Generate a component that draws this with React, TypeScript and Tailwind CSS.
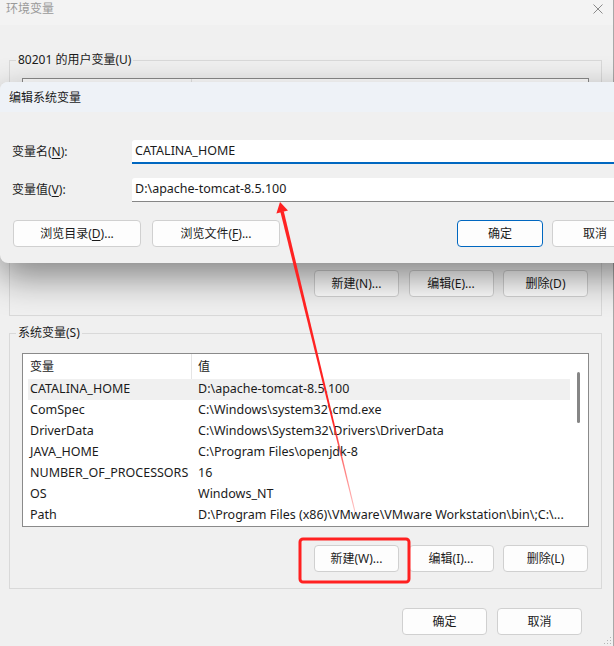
import React from "react";

const rows: [string, string][] = [
  ["CATALINA_HOME", "D:\\apache-tomcat-8.5.100"],
  ["ComSpec", "C:\\Windows\\system32\\cmd.exe"],
  ["DriverData", "C:\\Windows\\System32\\Drivers\\DriverData"],
  ["JAVA_HOME", "C:\\Program Files\\openjdk-8"],
  ["NUMBER_OF_PROCESSORS", "16"],
  ["OS", "Windows_NT"],
  ["Path", "D:\\Program Files (x86)\\VMware\\VMware Workstation\\bin\\;C:\\..."],
];

function Btn({ children, className = "" }: { children: React.ReactNode; className?: string }) {
  return (
    <div
      className={`flex h-[27px] shrink-0 items-center justify-center rounded-[4px] border border-[#d0d0d0] bg-[#fdfdfd] text-[12px] leading-none text-[#1b1b1b] ${className}`}
    >
      {children}
    </div>
  );
}

function ListBox({ data, showHeader }: { data: [string, string][]; showHeader: boolean }) {
  return (
    <div className="flex h-[174px] w-[567px] border border-[#8a8a8a] bg-white">
      <div className="flex flex-1 flex-col pl-[5px]">
        <div className="flex h-[25px] shrink-0 items-stretch text-[12px]">
          <div className="flex w-[163px] items-center pl-[2px]">{showHeader ? "变量" : ""}</div>
          <div className="w-px bg-[#e5e5e5]" />
          <div className="flex flex-1 items-center pl-[6px]">{showHeader ? "值" : ""}</div>
        </div>
        {data.map(([k, v], i) => (
          <div
            key={k}
            className={`grid h-[21px] shrink-0 grid-cols-[168px_1fr] items-center text-[12.5px] ${i === 0 ? "bg-[#f0f0f0]" : ""}`}
          >
            <div className="overflow-hidden whitespace-nowrap pl-[2px]">{k}</div>
            <div className="overflow-hidden whitespace-nowrap pl-[2px]">{v}</div>
          </div>
        ))}
      </div>
      <div className="flex w-[18px] shrink-0 flex-col pt-[18px]">
        {data.length > 0 && <div className="ml-[7px] h-[51px] w-[3px] rounded-full bg-[#868686]" />}
      </div>
    </div>
  );
}

export default function App() {
  return (
    <div className="relative h-[646px] w-[614px] overflow-hidden bg-[#f0f0f0] font-['Noto_Sans','Noto_Sans_CJK_SC',sans-serif] text-[#1b1b1b]">
      {/* main window */}
      <div className="flex h-full w-full flex-col border-r border-[#a8a8a8]">
        <div className="h-[25px] shrink-0 bg-[#f3f3f3]">
          <div className="flex h-[18px] items-center justify-between pl-[6px] pr-[10px]">
            <span className="text-[12px] leading-none text-[#9a9a9a]">环境变量</span>
            <svg width="10" height="10" viewBox="0 0 10 10">
              <path d="M0.5 0.5 L9.5 9.5 M9.5 0.5 L0.5 9.5" stroke="#8a8a8a" strokeWidth="1" />
            </svg>
          </div>
        </div>
        <div className="flex flex-col pl-[9px] pt-[27px]">
          <fieldset className="w-[592px] border border-[#d9d9d9] px-[12px] pb-[18px] pt-[10px]">
            <legend className="ml-[-6px] px-[2px] text-[12px] leading-[16px]">80201 的用户变量(U)</legend>
            <ListBox data={[]} showHeader={false} />
            <div className="mt-[18px] flex justify-end gap-[9.5px] pr-[1px]">
              <Btn className="w-[85px]">新建(N)...</Btn>
              <Btn className="w-[85px]">编辑(E)...</Btn>
              <Btn className="w-[85px]">删除(D)</Btn>
            </div>
          </fieldset>
          <fieldset className="mt-[9px] w-[592px] border border-[#d9d9d9] px-[12px] pb-[16px] pt-[12px]">
            <legend className="ml-[-6px] px-[2px] text-[12px] leading-[16px]">系统变量(S)</legend>
            <ListBox data={rows} showHeader={true} />
            <div className="mt-[18px] flex justify-end gap-[9.5px] pr-[1px]">
              <Btn className="w-[85px]">新建(W)...</Btn>
              <Btn className="w-[85px]">编辑(I)...</Btn>
              <Btn className="w-[85px]">删除(L)</Btn>
            </div>
          </fieldset>
          <div className="mt-[19px] flex justify-end gap-[10px] pr-[31px]">
            <Btn className="w-[85px]">确定</Btn>
            <Btn className="w-[85px]">取消</Btn>
          </div>
        </div>
      </div>

      {/* resize grip */}
      <svg className="absolute bottom-[1px] right-[2px]" width="10" height="10" viewBox="0 0 10 10">
        <rect x="8" y="2" width="1" height="1" fill="#b5b5b5" />
        <rect x="5" y="5" width="1" height="1" fill="#b5b5b5" />
        <rect x="8" y="5" width="1" height="1" fill="#b5b5b5" />
        <rect x="2" y="8" width="1" height="1" fill="#b5b5b5" />
        <rect x="5" y="8" width="1" height="1" fill="#b5b5b5" />
        <rect x="8" y="8" width="1" height="1" fill="#b5b5b5" />
      </svg>

      {/* edit dialog */}
      <div className="absolute left-0 top-[82px] flex h-[181px] w-[650px] flex-col overflow-hidden rounded-[8px] bg-[#f0f0f0] shadow-[0_14px_36px_rgba(0,0,0,0.45)]">
        <div className="flex h-[30px] shrink-0 items-center bg-[#eef2f7] pl-[9px] pt-[1px] text-[12px]">编辑系统变量</div>
        <div className="flex flex-col px-[12px] pt-[28px]">
          <div className="flex h-[24px] items-center">
            <div className="w-[120px] text-[12px]">
              变量名(<span className="underline underline-offset-2">N</span>):
            </div>
            <div className="flex h-[24px] flex-1 items-center rounded-t-[3px] border-b-2 border-[#0067c0] bg-white pl-[3px] text-[12.5px]">
              CATALINA_HOME
            </div>
          </div>
          <div className="mt-[14px] flex h-[24px] items-center">
            <div className="w-[120px] text-[12px]">
              变量值(<span className="underline underline-offset-2">V</span>):
            </div>
            <div className="flex h-[24px] flex-1 items-center rounded-t-[3px] border-b border-[#868686] bg-white pl-[3px] text-[12.5px]">
              D:\apache-tomcat-8.5.100
            </div>
          </div>
          <div className="mt-[18px] flex items-center">
            <Btn className="ml-[1px] w-[128px]">
              浏览目录(<span className="underline underline-offset-2">D</span>)...
            </Btn>
            <Btn className="ml-[11px] w-[128px]">
              浏览文件(<span className="underline underline-offset-2">F</span>)...
            </Btn>
            <Btn className="ml-auto w-[86px] !border-[#0067c0]">确定</Btn>
            <Btn className="ml-[9px] w-[86px]">取消</Btn>
          </div>
        </div>
      </div>

      {/* annotations */}
      <svg className="pointer-events-none absolute left-0 top-0" width="614" height="646" viewBox="0 0 614 646">
        <defs>
          <linearGradient id="arrowGrad" gradientUnits="userSpaceOnUse" x1="280" y1="203" x2="355" y2="512">
            <stop offset="0" stopColor="#ff2222" stopOpacity="1" />
            <stop offset="0.7" stopColor="#ff2222" stopOpacity="1" />
            <stop offset="1" stopColor="#ff5050" stopOpacity="0.35" />
          </linearGradient>
        </defs>
        <polygon points="283.8,211.3 280.4,212.1 354.5,512.1 355.5,511.9" fill="url(#arrowGrad)" />
        <polygon points="280,202 288,210.6 276.4,213.4" fill="#ff2222" />
        <rect x="300" y="539" width="109" height="43" rx="3" fill="none" stroke="#ff2020" strokeWidth="3" />
      </svg>
    </div>
  );
}
